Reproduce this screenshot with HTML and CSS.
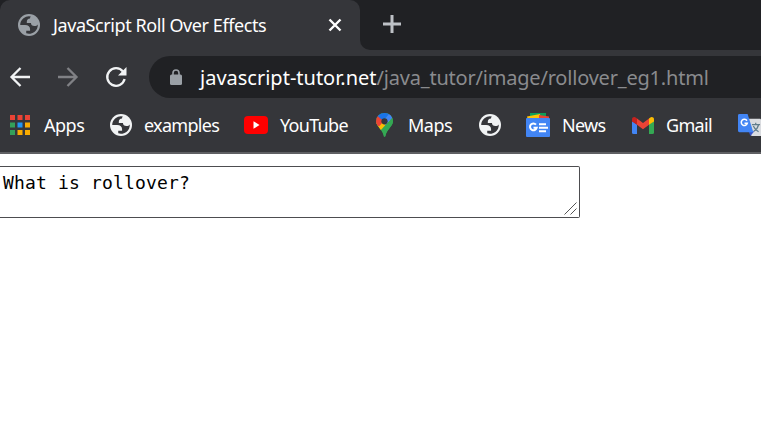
FILE: index.html
```html
<!DOCTYPE html>
<html lang="en">
<head>
<meta charset="utf-8">
<title>JavaScript Roll Over Effects</title>
<link rel="stylesheet" href="styles.css">
</head>
<body>
<svg width="0" height="0" class="defs">
  <symbol id="globe" viewBox="2 2 20 20">
    <circle cx="12" cy="12" r="10" fill="currentColor"/>
    <path class="hole" d="M4 12h4.400c3.407.022 4.922 1.730 4.543 5.127H9.488v2.470a8.004 8.004 0 0 0 10.498-8.083C19.327 12.504 18.332 13 17 13c-2.137 0-3.206-.916-3.206-2.750h-3.748c-.274-2.728.683-4.092 2.870-4.092 0-.975.327-1.597.811-1.970A8.004 8.004 0 0 0 4 12z"/>
  </symbol>
</svg>

<header class="tabs">
  <div class="tab">
    <svg class="globe tab-globe"><use href="#globe"/></svg>
    <span class="tab-title">JavaScript Roll Over Effects</span>
    <svg class="close" viewBox="0 0 14 14"><path d="M1.500 1.500l11 11M12.500 1.500l-11 11"/></svg>
  </div>
  <div class="strip">
    <svg class="plus" viewBox="0 0 18 18"><path d="M9 0v18M0 9h18"/></svg>
  </div>
</header>

<nav class="toolbar">
  <svg class="nav back" viewBox="0 0 20 20"><path d="M20 10H2M10.500 1L1.500 10l9 9"/></svg>
  <svg class="nav forward" viewBox="0 0 20 20"><path d="M0 10h18M9.500 1l9 9-9 9"/></svg>
  <svg class="nav reload" viewBox="0 0 22 22"><path d="M18 5.600A8.800 8.800 0 1 0 19.600 13"/><path class="tip" d="M21.500 1v8.500H13z"/></svg>
  <div class="address">
    <svg class="lock" viewBox="0 0 12 16"><path class="shackle" d="M3 6V4a3 3 0 0 1 6 0v2"/><rect y="5.500" width="12" height="10.500" rx="1.500"/></svg>
    <span class="url"><b>javascript-tutor.net</b>/java_tutor/image/rollover_eg1.html</span>
  </div>
</nav>

<nav class="bookmarks">
  <a class="mark apps">
    <svg class="i-apps" viewBox="0 0 20 20"><path fill="#ea4335" d="M0 0h5v5H0zM7.500 0h5v5h-5zM15 0h5v5h-5z"/><path fill="#34a05a" d="M0 7.500h5v5H0zM0 15h5v5H0z"/><path fill="#2196f3" d="M7.500 7.500h5v5h-5z"/><path fill="#f9ab00" d="M15 7.500h5v5h-5zM7.500 15h5v5h-5zM15 15h5v5h-5z"/></svg>
    <span>Apps</span>
  </a>
  <a class="mark examples"><svg class="globe"><use href="#globe"/></svg><span>examples</span></a>
  <a class="mark youtube">
    <svg class="i-youtube" viewBox="0 0 24 18"><rect width="24" height="18" rx="4" fill="#f00"/><path d="M9.500 5.200l6 3.800-6 3.800z" fill="#fff"/></svg>
    <span>YouTube</span>
  </a>
  <a class="mark maps">
    <svg class="i-maps" viewBox="0 0 17 24">
      <clipPath id="pin"><path d="M8.500 0A8.300 8.300 0 0 0 0 8.300C0 13 6.500 17 7.500 22.500c.2 1.800 1.800 1.800 2 0C10.500 17 17 13 17 8.300A8.300 8.300 0 0 0 8.500 0z"/></clipPath>
      <g clip-path="url(#pin)"><path fill="#34a853" d="M0 0h17v24H0z"/><path fill="#fbbc04" d="M0 10L7 5l7 2L4 18z"/><path fill="#ea4335" d="M0 0l8 8-5 5.500-3-2z"/><path fill="#1a73e8" d="M1.500 3L7 7.800 14.500 0H0z"/><path fill="#4285f4" d="M14.500-1L6.500 9l3 3L17 4z"/><path fill="#34a853" d="M17 4.500L6 17l2.500 7H17z"/></g>
      <circle cx="8.500" cy="8.300" r="3.100" fill="#35363a"/>
    </svg>
    <span>Maps</span>
  </a>
  <a class="mark lone"><svg class="globe"><use href="#globe"/></svg></a>
  <a class="mark news">
    <svg class="i-news" viewBox="0 0 24 24"><path fill="#0f9d58" d="M4 0h16v8H4z"/><path fill="#ffc107" d="M1 3.500L14 1l1 7H2z"/><path fill="#ea4335" d="M13 2l10 1.500V8H13z"/><rect y="5" width="24" height="19" rx="1" fill="#4285f4"/><path fill="none" stroke="#fff" stroke-width="2" d="M10 11.600a3.400 3.400 0 1 0 .7 3.200H7.500M13 11.200h7M13 14.700h9M13 18.200h7"/></svg>
    <span>News</span>
  </a>
  <a class="mark gmail">
    <svg class="i-gmail" viewBox="0 0 22 17"><path fill="#4285f4" d="M0 4l5 3.500V17H1.500A1.500 1.500 0 0 1 0 15.500z"/><path fill="#34a853" d="M22 4l-5 3.500V17h3.500a1.500 1.500 0 0 0 1.500-1.500z"/><path fill="#ea4335" d="M5 1.500l6 4.500 6-4.500v6.200L11 12.200 5 7.700z"/><path fill="#c5221f" d="M0 2.500C0 .2 2.400-.5 4 .7l1 .8v6.200L0 4.500z"/><path fill="#fbbc04" d="M22 2.500C22 .2 19.600-.5 18 .7l-1 .8v6.200l5-3.200z"/></svg>
    <span>Gmail</span>
  </a>
  <a class="mark translate">
    <svg class="i-translate" viewBox="0 0 24 24"><path fill="#dadce0" d="M9 5h14a1 1 0 0 1 1 1v17H14z"/><path fill="#3b55c5" d="M11 18h6l-4 5z"/><path fill="#4285f4" d="M1.500 0H10l6 19H1.500A1.500 1.500 0 0 1 0 17.500v-16A1.500 1.500 0 0 1 1.500 0z"/><path fill="none" stroke="#fff" stroke-width="1.600" d="M9.300 7a3.200 3.200 0 1 0 .4 2.600H6.800"/><path fill="none" stroke="#607d8b" stroke-width="1.300" d="M14.500 11H23M18.500 9v2M21.500 11c-.7 3-2.500 5.500-5 7M16 12.500c1 2.500 3 4.500 5.500 6"/></svg>
  </a>
</nav>

<main class="page">
  <div class="field">
    <span>What is rollover?</span>
    <svg class="grip" viewBox="0 0 13 13"><path d="M.5 12.500l12-12M6.500 12.500l6-6"/></svg>
  </div>
</main>
</body>
</html>
```
FILE: styles.css
```css
* { box-sizing: border-box; }
body {
  margin: 0;
  width: 761px;
  height: 430px;
  overflow: hidden;
  background: #fff;
  font-family: "Noto Sans", "Open Sans", sans-serif;
  color: #fff;
}
svg { display: block; flex: none; overflow: visible; }
.defs { position: absolute; }
.hole { fill: #35363a; }
.globe { width: 22px; height: 22px; color: #f1f3f4; }
.tabs { display: flex; height: 50px; background: linear-gradient(#202124 25px, #35363a 25px); }
.tab {
  display: flex;
  align-items: center;
  width: 360px;
  padding: 0 18px;
  background: #35363a;
  border-radius: 10px 10px 0 0;
}
.tab-globe { color: #9aa0a6; }
.tab-title { width: 276px; margin-left: 13px; font-size: 18px; letter-spacing: -0.42px; white-space: nowrap; }
.close { width: 14px; height: 14px; fill: none; stroke: #fff; stroke-width: 2.4; }
.strip { flex: 1; padding: 15px 23px; background: #202124; border-bottom-left-radius: 10px; }
.plus { width: 18px; height: 18px; fill: none; stroke: #bdc1c6; stroke-width: 3; }
.toolbar { display: flex; align-items: center; height: 54px; padding-left: 10px; background: #35363a; }
.nav { width: 20px; height: 20px; fill: none; stroke: #f1f3f4; stroke-width: 2.3; }
.forward { margin-left: 28px; stroke: #808185; }
.reload { width: 22px; height: 22px; margin-left: 27px; }
.reload .tip { fill: #f1f3f4; stroke: none; }
.address {
  display: flex;
  flex: 1;
  align-items: center;
  height: 42px;
  margin-left: 22px;
  padding-left: 21px;
  background: #202124;
  border-radius: 21px 0 0 21px;
}
.lock { width: 12px; height: 16px; fill: #9aa0a6; }
.shackle { fill: none; stroke: #9aa0a6; stroke-width: 1.6; }
.url { margin-left: 18px; color: #8a8b8e; font-size: 20px; letter-spacing: -0.2px; white-space: nowrap; }
.url b { color: #fff; font-weight: 400; letter-spacing: 0; }
.bookmarks { display: flex; height: 50px; padding-left: 10px; background: #35363a; border-bottom: 2px solid #5f6063; overflow: hidden; }
.mark { display: flex; flex: none; align-items: center; gap: 12px; height: 42px; font-size: 18px; letter-spacing: -0.7px; white-space: nowrap; }
.mark span { padding-bottom: 1px; }
.apps { width: 100px; gap: 14px; letter-spacing: -0.5px; }
.examples { width: 134px; }
.youtube { width: 132px; }
.maps { width: 103px; gap: 15px; letter-spacing: -0.5px; }
.lone { width: 47px; }
.news { width: 106px; }
.gmail { width: 106px; }
.i-apps { width: 20px; height: 20px; }
.i-youtube { width: 24px; height: 18px; }
.i-maps { width: 17px; height: 24px; }
.i-news { width: 24px; height: 24px; }
.i-translate { width: 23px; height: 23px; }
.i-gmail { width: 22px; height: 17px; }
.page { padding-top: 12px; }
.field {
  display: flex;
  justify-content: space-between;
  width: 580px;
  height: 52px;
  padding: 4px 2px 2px 3px;
  border: 1px solid #4d4d50;
  border-left: 0;
  border-radius: 0 2px 2px 0;
  color: #000;
  font: 18px/24px "DejaVu Sans Mono", monospace;
  letter-spacing: .16px;
}
.grip { width: 13px; height: 13px; align-self: flex-end; fill: none; stroke: #555; stroke-width: 1; }
```
